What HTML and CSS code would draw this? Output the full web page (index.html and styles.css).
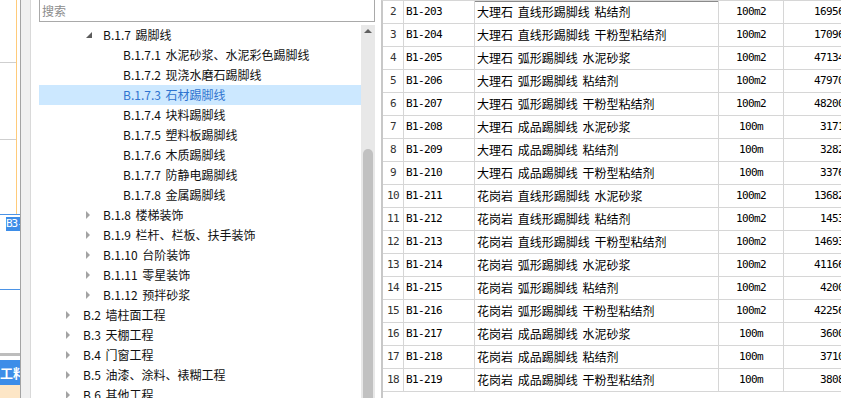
FILE: index.html
```html
<!DOCTYPE html>
<html lang="zh-CN">
<head>
  <meta charset="UTF-8" />
  <title>定额库</title>
  <link rel="stylesheet" href="styles.css">
</head>
<body>
  <div class="sheet-edge">
    <div class="edge-grid">
      <div class="edge-cell edge-a"></div>
      <div class="edge-cell edge-b"></div>
      <div class="edge-cell edge-c"></div>
    </div>
    <div class="edge-sel"><span class="edge-pick">B3-</span></div>
    <div class="edge-blank"></div>
    <div class="edge-gap"></div>
    <div class="edge-tab">工料</div>
    <div class="edge-foot"></div>
  </div>

  <div class="splitter"></div>

  <div class="panel">
    <input class="search" type="text" placeholder="搜索" />
    <div class="tree-wrap">
      <div class="tree">
        <div class="node lvl2"><span class="tog open"></span>B.1.7 踢脚线</div>
        <div class="node lvl3"><span class="tog"></span>B.1.7.1 水泥砂浆、水泥彩色踢脚线</div>
        <div class="node lvl3"><span class="tog"></span>B.1.7.2 现浇水磨石踢脚线</div>
        <div class="node lvl3 selected"><span class="tog"></span>B.1.7.3 石材踢脚线</div>
        <div class="node lvl3"><span class="tog"></span>B.1.7.4 块料踢脚线</div>
        <div class="node lvl3"><span class="tog"></span>B.1.7.5 塑料板踢脚线</div>
        <div class="node lvl3"><span class="tog"></span>B.1.7.6 木质踢脚线</div>
        <div class="node lvl3"><span class="tog"></span>B.1.7.7 防静电踢脚线</div>
        <div class="node lvl3"><span class="tog"></span>B.1.7.8 金属踢脚线</div>
        <div class="node lvl2"><span class="tog closed"></span>B.1.8 楼梯装饰</div>
        <div class="node lvl2"><span class="tog closed"></span>B.1.9 栏杆、栏板、扶手装饰</div>
        <div class="node lvl2"><span class="tog closed"></span>B.1.10 台阶装饰</div>
        <div class="node lvl2"><span class="tog closed"></span>B.1.11 零星装饰</div>
        <div class="node lvl2"><span class="tog closed"></span>B.1.12 预拌砂浆</div>
        <div class="node lvl1"><span class="tog closed"></span>B.2 墙柱面工程</div>
        <div class="node lvl1"><span class="tog closed"></span>B.3 天棚工程</div>
        <div class="node lvl1"><span class="tog closed"></span>B.4 门窗工程</div>
        <div class="node lvl1"><span class="tog closed"></span>B.5 油漆、涂料、裱糊工程</div>
        <div class="node lvl1"><span class="tog closed"></span>B.6 其他工程</div>
      </div>
      <div class="scrollbar">
        <div class="scroll-up"></div>
        <div class="scroll-thumb"></div>
      </div>
    </div>
  </div>

  <div class="grid">
    <div class="row first"><span class="c-no">2</span><span class="c-code">B1-203</span><span class="c-name">大理石 直线形踢脚线 粘结剂</span><span class="c-unit">100m2</span><span class="c-val">16956</span></div>
    <div class="row"><span class="c-no">3</span><span class="c-code">B1-204</span><span class="c-name">大理石 直线形踢脚线 干粉型粘结剂</span><span class="c-unit">100m2</span><span class="c-val">17096</span></div>
    <div class="row"><span class="c-no">4</span><span class="c-code">B1-205</span><span class="c-name">大理石 弧形踢脚线 水泥砂浆</span><span class="c-unit">100m2</span><span class="c-val">47134</span></div>
    <div class="row"><span class="c-no">5</span><span class="c-code">B1-206</span><span class="c-name">大理石 弧形踢脚线 粘结剂</span><span class="c-unit">100m2</span><span class="c-val">47970</span></div>
    <div class="row"><span class="c-no">6</span><span class="c-code">B1-207</span><span class="c-name">大理石 弧形踢脚线 干粉型粘结剂</span><span class="c-unit">100m2</span><span class="c-val">48200</span></div>
    <div class="row"><span class="c-no">7</span><span class="c-code">B1-208</span><span class="c-name">大理石 成品踢脚线 水泥砂浆</span><span class="c-unit">100m</span><span class="c-val">3171</span></div>
    <div class="row"><span class="c-no">8</span><span class="c-code">B1-209</span><span class="c-name">大理石 成品踢脚线 粘结剂</span><span class="c-unit">100m</span><span class="c-val">3282</span></div>
    <div class="row"><span class="c-no">9</span><span class="c-code">B1-210</span><span class="c-name">大理石 成品踢脚线 干粉型粘结剂</span><span class="c-unit">100m</span><span class="c-val">3376</span></div>
    <div class="row"><span class="c-no">10</span><span class="c-code">B1-211</span><span class="c-name">花岗岩 直线形踢脚线 水泥砂浆</span><span class="c-unit">100m2</span><span class="c-val">13682</span></div>
    <div class="row"><span class="c-no">11</span><span class="c-code">B1-212</span><span class="c-name">花岗岩 直线形踢脚线 粘结剂</span><span class="c-unit">100m2</span><span class="c-val">1453</span></div>
    <div class="row"><span class="c-no">12</span><span class="c-code">B1-213</span><span class="c-name">花岗岩 直线形踢脚线 干粉型粘结剂</span><span class="c-unit">100m2</span><span class="c-val">14693</span></div>
    <div class="row"><span class="c-no">13</span><span class="c-code">B1-214</span><span class="c-name">花岗岩 弧形踢脚线 水泥砂浆</span><span class="c-unit">100m2</span><span class="c-val">41166</span></div>
    <div class="row"><span class="c-no">14</span><span class="c-code">B1-215</span><span class="c-name">花岗岩 弧形踢脚线 粘结剂</span><span class="c-unit">100m2</span><span class="c-val">4200</span></div>
    <div class="row"><span class="c-no">15</span><span class="c-code">B1-216</span><span class="c-name">花岗岩 弧形踢脚线 干粉型粘结剂</span><span class="c-unit">100m2</span><span class="c-val">42256</span></div>
    <div class="row"><span class="c-no">16</span><span class="c-code">B1-217</span><span class="c-name">花岗岩 成品踢脚线 水泥砂浆</span><span class="c-unit">100m</span><span class="c-val">3600</span></div>
    <div class="row"><span class="c-no">17</span><span class="c-code">B1-218</span><span class="c-name">花岗岩 成品踢脚线 粘结剂</span><span class="c-unit">100m</span><span class="c-val">3710</span></div>
    <div class="row"><span class="c-no">18</span><span class="c-code">B1-219</span><span class="c-name">花岗岩 成品踢脚线 干粉型粘结剂</span><span class="c-unit">100m</span><span class="c-val">3808</span></div>
  </div>
</body>
</html>
```

FILE: styles.css
```css
body {
  margin: 0;
  width: 841px;
  height: 398px;
  overflow: hidden;
  display: flex;
  background: #fff;
  font-family: "Noto Sans CJK SC", "Noto Sans", sans-serif;
  font-size: 12px;
  color: #111;
}

/* strip of the sheet window behind */
.sheet-edge {
  width: 20px;
  flex: none;
  display: flex;
  flex-direction: column;
  background: #fff;
}
.edge-grid {
  width: 16px;
  height: 214px;
  border-right: 1px solid #ffcb7a;
  display: flex;
  flex-direction: column;
}
.edge-cell {
  border-bottom: 1px solid #cfcfcf;
}
.edge-a {
  height: 62px;
}
.edge-b {
  height: 76px;
}
.edge-c {
  flex: 1;
  border-bottom: none;
}
.edge-sel {
  height: 74px;
  border-top: 1px solid #4b93e6;
  border-bottom: 1px solid #4b93e6;
}
.edge-pick {
  display: block;
  margin: 2px 0 0 6px;
  height: 14px;
  line-height: 14px;
  background: #3d8de8;
  color: #fff;
  font-family: "DejaVu Sans Mono", monospace;
  font-size: 11px;
  letter-spacing: -1px;
  overflow: hidden;
  white-space: nowrap;
}
.edge-blank {
  height: 63px;
}
.edge-gap {
  height: 4px;
  border-top: 3px solid #bdbdbd;
}
.edge-tab {
  height: 25px;
  line-height: 25px;
  background: #3d8de8;
  color: #fff;
  font-size: 13px;
  font-weight: bold;
  white-space: nowrap;
  overflow: hidden;
}
.edge-foot {
  flex: 1;
  background: #fde6c6;
}

.splitter {
  width: 11px;
  flex: none;
  box-sizing: border-box;
  background: #f0f0f0;
  border-left: 1px solid #a3a3a3;
  border-right: 1px solid #d9d9d9;
}

/* left tree panel */
.panel {
  width: 350px;
  flex: none;
  box-sizing: border-box;
  padding: 0 6px 0 8px;
  display: flex;
  flex-direction: column;
  overflow: hidden;
}
.search {
  margin: -2px 0 0;
  height: 24px;
  box-sizing: border-box;
  border: 1px solid #a9a9a9;
  padding: 0 2px;
  font-family: "Noto Sans CJK SC", sans-serif;
  font-size: 12px;
  outline: none;
}
.search::placeholder {
  color: #8c8c8c;
}
.tree-wrap {
  margin-top: 3px;
  flex: 1;
  display: flex;
  overflow: hidden;
}
.tree {
  flex: 1;
}
.node {
  height: 20px;
  line-height: 20px;
  display: flex;
  align-items: center;
  white-space: pre;
  word-spacing: 2px;
}
.node.selected {
  background: #cce8ff;
  color: #2f74cf;
}
.lvl1 {
  padding-left: 24px;
}
.lvl2 {
  padding-left: 44px;
}
.lvl3 {
  padding-left: 64px;
}
.tog {
  width: 20px;
  flex: none;
  display: flex;
  align-items: center;
  box-sizing: border-box;
  padding-left: 3px;
}
.tog.closed::before {
  content: "";
  border-left: 4px solid #a3a3a3;
  border-top: 4px solid transparent;
  border-bottom: 4px solid transparent;
}
.tog.open::before {
  content: "";
  border-bottom: 6px solid #5c5c5c;
  border-left: 6px solid transparent;
}
.scrollbar {
  width: 14px;
  flex: none;
  background: #e8e8e8;
  display: flex;
  flex-direction: column;
  align-items: center;
}
.scroll-up {
  margin-top: 4px;
  width: 0;
  border-bottom: 4px solid #606060;
  border-left: 4px solid transparent;
  border-right: 4px solid transparent;
}
.scroll-thumb {
  margin-top: 116px;
  width: 10px;
  height: 260px;
  flex: none;
  border-radius: 5px;
  background: #c1c1c1;
}

/* quota table */
.grid {
  flex: none;
  border-left: 2px solid #c8c8c8;
  border-top: 1px solid #d6d6d6;
  color: #000;
}
.row {
  display: grid;
  grid-template-columns: 21px 71px 244px 65px 67px;
  height: 23px;
}
.row span {
  box-sizing: border-box;
  height: 23px;
  line-height: 22px;
  border-right: 1px solid #d6d6d6;
  border-bottom: 1px solid #d6d6d6;
  white-space: nowrap;
  overflow: hidden;
}
.row.first .c-name {
  box-shadow: inset 0 1px 0 #8a8a8a;
}
.c-no,
.c-code,
.c-unit,
.c-val {
  font-family: "DejaVu Sans Mono", monospace;
  font-size: 11px;
  letter-spacing: -0.6px;
}
.c-no {
  text-align: center;
  color: #333;
}
.c-code {
  padding-left: 2px;
}
.c-name {
  padding-left: 2px;
  word-spacing: 2px;
}
.c-unit {
  text-align: center;
}
.c-val {
  text-align: right;
  padding-right: 6px;
}
```
